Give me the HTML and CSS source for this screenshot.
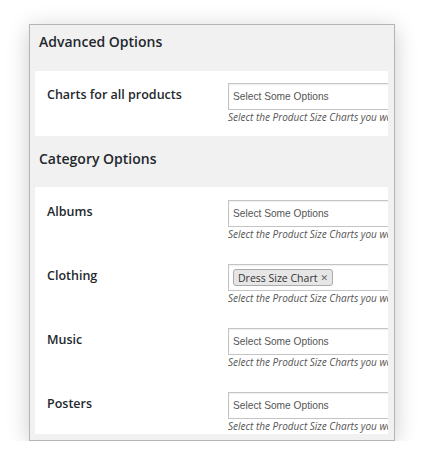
FILE: index.html
```html
<!DOCTYPE html>
<html>
<head>
<meta charset="utf-8">
<link rel="stylesheet" href="styles.css">
</head>
<body>
<div class="stage">
  <div class="window">
    <h2 class="section-title first">Advanced Options</h2>
    <div class="panel">
      <div class="row">
        <div class="label">Charts for all products</div>
        <div class="field">
          <div class="select"><span class="placeholder">Select Some Options</span></div>
          <div class="desc">Select the Product Size Charts you want to display for all products</div>
        </div>
      </div>
    </div>
    <h2 class="section-title">Category Options</h2>
    <div class="panel panel-cats">
      <div class="row">
        <div class="label">Albums</div>
        <div class="field">
          <div class="select"><span class="placeholder">Select Some Options</span></div>
          <div class="desc">Select the Product Size Charts you want to display for this category</div>
        </div>
      </div>
      <div class="row">
        <div class="label">Clothing</div>
        <div class="field">
          <div class="select select-tags"><span class="tag">Dress Size Chart <span class="tag-x">✕</span></span></div>
          <div class="desc">Select the Product Size Charts you want to display for this category</div>
        </div>
      </div>
      <div class="row">
        <div class="label">Music</div>
        <div class="field">
          <div class="select"><span class="placeholder">Select Some Options</span></div>
          <div class="desc">Select the Product Size Charts you want to display for this category</div>
        </div>
      </div>
      <div class="row">
        <div class="label">Posters</div>
        <div class="field">
          <div class="select"><span class="placeholder">Select Some Options</span></div>
          <div class="desc">Select the Product Size Charts you want to display for this category</div>
        </div>
      </div>
    </div>
  </div>
</div>
</body>
</html>
```

FILE: styles.css
```css
html, body {
  margin: 0;
  padding: 0;
  background: #ffffff;
}
body {
  font-family: "Open Sans", "Noto Sans", sans-serif;
  color: #23282d;
}
.stage {
  padding: 24px 0 0 29px;
}
.window {
  box-sizing: border-box;
  width: 366px;
  background: #f1f1f1;
  border: 1px solid #b4b4b4;
  box-shadow: 0 4px 22px rgba(0, 0, 0, 0.2);
  padding: 0 6px 6px 5px;
}
.section-title {
  margin: 13px 0 18px 4px;
  font-size: 14px;
  line-height: 20px;
  font-weight: 600;
  color: #23282d;
}
.section-title.first {
  margin-top: 7px;
  margin-bottom: 19px;
}
.panel {
  background: #ffffff;
  overflow: hidden;
  padding: 12px 0 12px 0;
}
.panel-cats {
  padding: 13px 0 1px 0;
  display: flex;
  flex-direction: column;
  gap: 23px;
}
.row {
  display: flex;
}
.label {
  width: 181px;
  flex: none;
  padding: 2px 0 0 12px;
  font-size: 12.5px;
  line-height: 20px;
  font-weight: 600;
  color: #23282d;
}
.field {
  flex: none;
  width: 360px;
}
.select {
  height: 27px;
  box-sizing: border-box;
  border: 1px solid #c4c4c4;
  background: #fff;
  box-shadow: inset 0 1px 2px rgba(0, 0, 0, 0.07);
  display: flex;
  align-items: center;
  padding-left: 4px;
}
.placeholder {
  font-family: "Liberation Sans", Arial, sans-serif;
  font-size: 10.2px;
  color: #555;
}
.tag {
  display: inline-flex;
  align-items: center;
  height: 17px;
  box-sizing: border-box;
  padding: 0 4px 0 4px;
  border: 1px solid #ababab;
  border-radius: 3px;
  background: #e6e6e6;
  font-size: 10.5px;
  color: #333;
  white-space: nowrap;
}
.tag-x {
  font-family: "DejaVu Sans", sans-serif;
  font-size: 9px;
  font-weight: 700;
  color: #666;
  margin-left: 3px;
}
.desc {
  font-size: 10px;
  line-height: 14px;
  font-style: italic;
  color: #555;
  white-space: nowrap;
}
```
